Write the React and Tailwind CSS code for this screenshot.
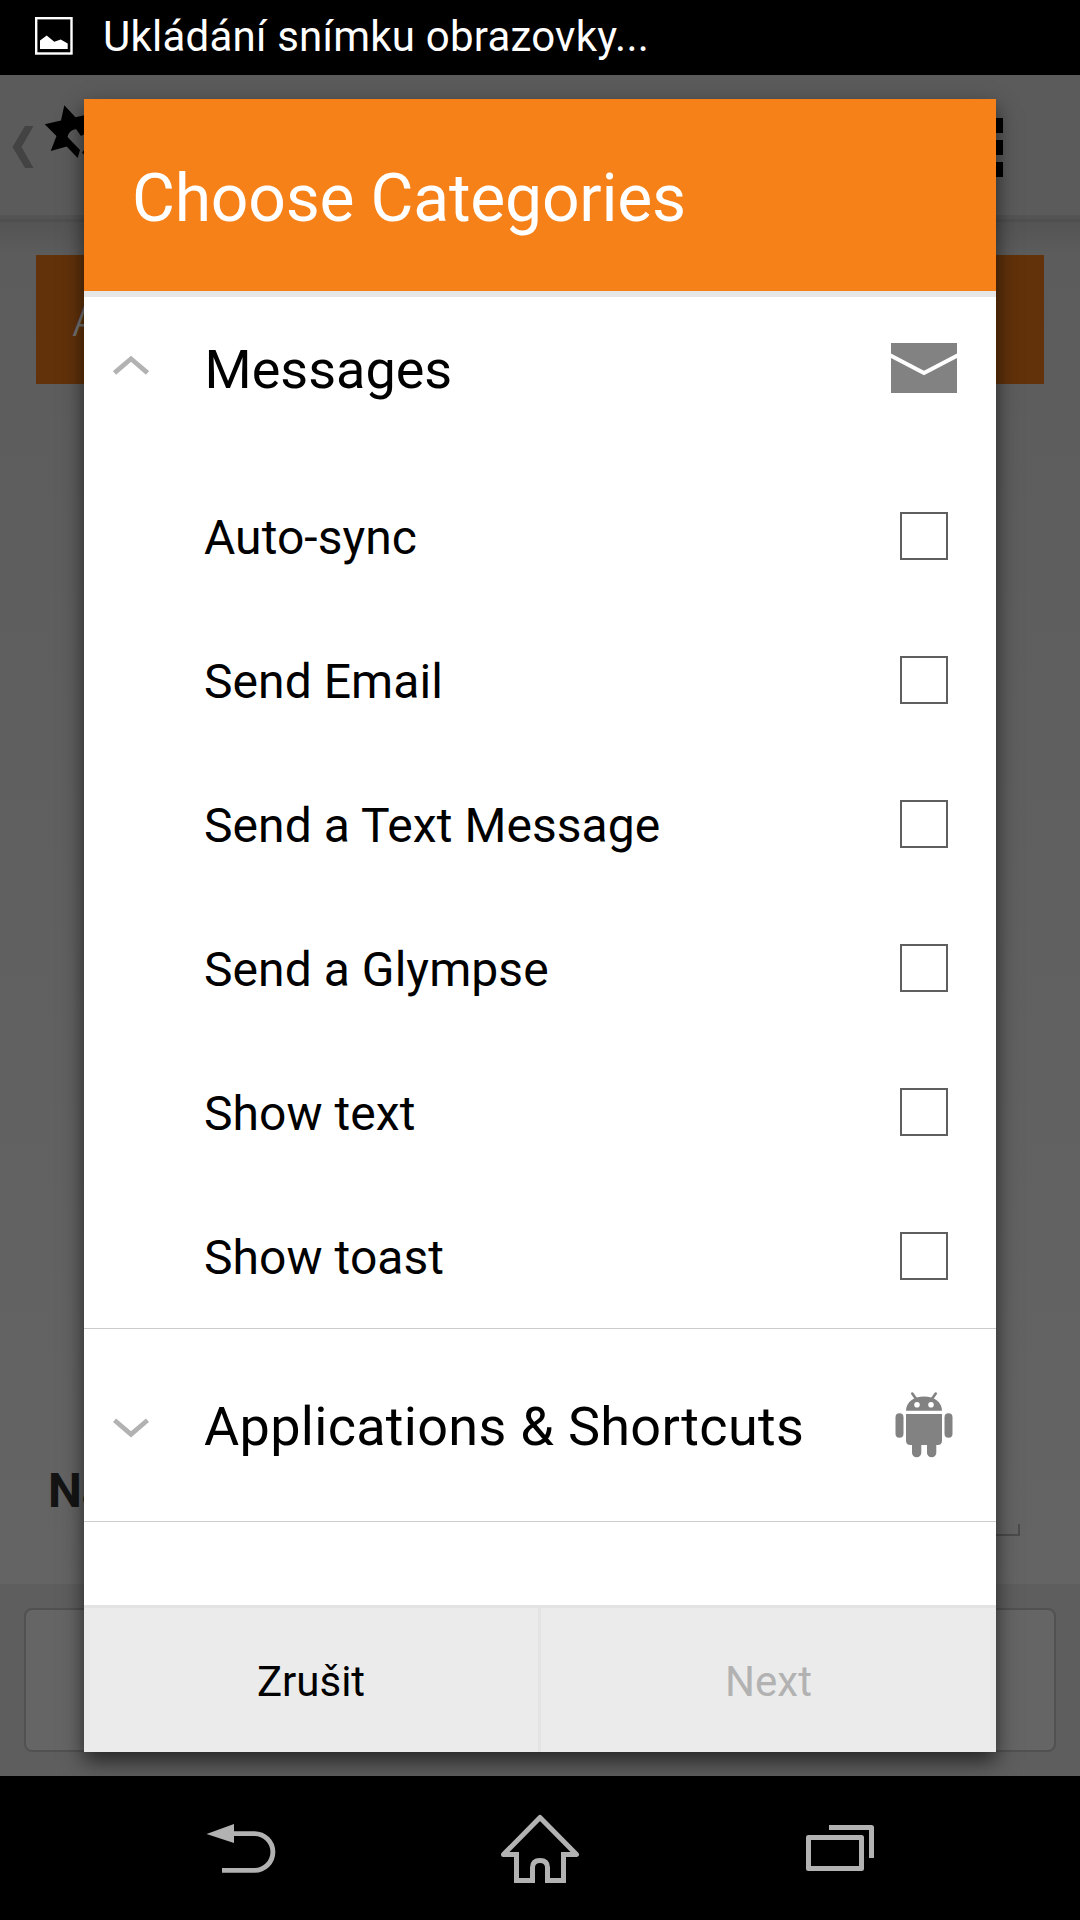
import React, { useState } from 'react';

const MESSAGE_ITEMS = [
  'Auto-sync',
  'Send Email',
  'Send a Text Message',
  'Send a Glympse',
  'Show text',
  'Show toast',
];

const PictureIcon = () => (
  <svg className="w-[38px] h-[38px]" viewBox="0 0 38 38" fill="none">
    <rect x="1.2" y="1.2" width="35.3" height="35.3" stroke="#fff" strokeWidth="2.4" />
    <path d="M5 32v-8.5l6.7-5 7.6 6.3 6.4-2.3 7 4V32z" fill="#fff" />
  </svg>
);

const Chevron = ({ open }) => (
  <svg className="w-9 h-9" viewBox="0 0 36 36" fill="none" stroke="#b2b2b2" strokeWidth="4.8">
    <path d={open ? 'M1.5 23L18 8.8L34.5 23' : 'M1.5 13.2L18 27.4L34.5 13.2'} />
  </svg>
);

const MailIcon = () => (
  <svg className="w-[66px] h-[50px] -mt-px" viewBox="0 0 66 50" fill="none">
    <rect width="66" height="50" fill="#828282" />
    <path d="M-1 12.2L33 30L67 12.2" stroke="#fff" strokeWidth="4" />
  </svg>
);

const AndroidIcon = () => (
  <svg className="w-[58px] h-[66px] -mt-px" viewBox="0 0 58 66" fill="#828282">
    <path d="M17.3 1.5L21.5 7.5M40.7 1.5L36.5 7.5" stroke="#828282" strokeWidth="2.6" strokeLinecap="round" />
    <path d="M11 18.7C11 10.5 18.5 4.6 29 4.6S47 10.5 47 18.7z" />
    <circle cx="22" cy="12.8" r="2.8" fill="#fff" />
    <circle cx="36" cy="12.8" r="2.8" fill="#fff" />
    <path d="M11 22h36v26.5q0 4.5-4.5 4.5h-27q-4.5 0-4.5-4.5z" />
    <rect x="0.5" y="21.2" width="8" height="24.5" rx="4" />
    <rect x="49.5" y="21.2" width="8" height="24.5" rx="4" />
    <rect x="17" y="46" width="9.3" height="19.3" rx="4.6" />
    <rect x="32" y="46" width="9.3" height="19.3" rx="4.6" />
  </svg>
);

const BackIcon = () => (
  <svg className="w-24 h-24" viewBox="0 0 96 96" fill="none">
    <path d="M14.5 34L42 24v19z" fill="#b2b2b2" />
    <path d="M41 33.6H62.5a18.4 18.4 0 0 1 0 36.8H30" stroke="#b2b2b2" strokeWidth="4.9" />
  </svg>
);

const HomeIcon = () => (
  <svg className="w-24 h-24" viewBox="0 0 96 96" fill="none" stroke="#b2b2b2" strokeWidth="5" strokeLinejoin="round">
    <path d="M24.5 54.5H11.5L48 17.5L84.5 54.5H71.5" />
    <path d="M24.5 52V80.5H40.5V67.5Q40.5 60.5 48 60.5T55.5 67.5V80.5H71.5V52" strokeLinejoin="miter" />
  </svg>
);

const RecentsIcon = () => (
  <svg className="w-24 h-24" viewBox="0 0 96 96" fill="none" stroke="#b2b2b2" strokeWidth="5" strokeLinejoin="round">
    <rect x="16.5" y="37.5" width="53" height="31" />
    <path d="M37 27.5H79.5V58" />
  </svg>
);

const StatusBar = () => (
  <div className="h-[75px] bg-black flex items-center pl-[35px] pb-[3px] gap-[30px]">
    <PictureIcon />
    <span className="pt-[2px] text-[42px] leading-none tracking-[0.23px] text-white whitespace-nowrap">Ukládání snímku obrazovky...</span>
  </div>
);

// The screen behind the dialog, already dimmed
const DimmedScreen = () => (
  <div className="h-full flex flex-col bg-linear-to-b from-[#5b5b5b] to-[#656565]">
    <div className="h-[140px] bg-[#5b5b5b] flex items-start justify-between pl-[12px] pr-[77px]">
      <div className="flex items-start">
        <svg className="w-[22px] h-[42px] mt-[51px]" viewBox="0 0 22 42" fill="#434343">
          <path d="M0.5 21L13 0h8.5L9.5 21L21.5 42H13z" />
        </svg>
        <svg className="w-[60px] h-[60px] mt-[30px] ml-[10px]" viewBox="0 0 60 60" fill="#000">
          <path d="M20.3 0.3L31.5 12.3L46 9V26L37 31L32 24Q25 25 23.5 32L36 45L33.7 53L22.7 41.5L6.7 46L12.5 31L0.7 19.3L17 15.5z" />
          <path d="M38 47.5L41 44L48 52L45 55z" />
        </svg>
      </div>
      <div className="flex flex-col gap-[7px] mt-[43px]">
        <div className="size-[15px] bg-black" />
        <div className="size-[15px] bg-black" />
        <div className="size-[15px] bg-black" />
      </div>
    </div>
    <div className="h-[4px] bg-[#545454]" />
    <div className="h-[3px] bg-[#4f4f4f]" />
    <div className="h-[33px] bg-linear-to-b from-[#545454] to-[#5c5c5c]" />
    <div className="h-[129px] mx-9 bg-[#62320a] flex items-center pl-[36px]">
      <span className="text-[48px] leading-none font-light text-[#757575]">A</span>
    </div>
    <div className="flex-1 flex items-end justify-between pl-12 pr-[60px] pb-[48px]">
      <span className="text-[48px] leading-none font-bold text-[#141414] mb-[21px]">Na</span>
      <div className="w-[780px] h-3 border-x-2 border-b-2 border-[#4b4b4b]" />
    </div>
    <div className="h-48 p-6 bg-[#5e5e5e]">
      <div className="h-full rounded-lg border-2 border-[#515151] bg-[#656565]" />
    </div>
  </div>
);

const GroupRow = ({ label, labelClass, open, icon, onClick }) => (
  <div onClick={onClick} className="h-48 shrink-0 flex items-center pl-[29px] cursor-pointer">
    <Chevron open={open} />
    <span className={`flex-1 pt-[4px] text-[54px] leading-none text-black whitespace-nowrap ${labelClass}`}>{label}</span>
    <div className="w-36 shrink-0 flex justify-center">{icon}</div>
  </div>
);

const ItemRow = ({ label, checked, onToggle }) => (
  <div onClick={onToggle} className="h-36 shrink-0 flex items-center pl-[120px] pr-12 cursor-pointer">
    <span className="flex-1 pt-[3px] text-[48px] leading-none tracking-[0.06px] text-black">{label}</span>
    <div className={`size-12 border-2 border-[#5f5f5f] ${checked ? 'bg-[#f78119]' : 'bg-white'}`} />
  </div>
);

const CategoryDialog = () => {
  const [openGroup, setOpenGroup] = useState('messages');
  const [selected, setSelected] = useState([]);

  const toggleGroup = (name) => setOpenGroup(openGroup === name ? null : name);
  const toggleItem = (item) => {
    setSelected(selected.includes(item) ? selected.filter((i) => i !== item) : [...selected, item]);
  };

  return (
    <div className="w-[912px] h-[1653px] flex flex-col bg-white shadow-[0_9px_20px_rgba(0,0,0,0.62)]">

      {/* Header */}
      <div className="h-[198px] shrink-0 flex items-center pl-12 pt-[7px] bg-[#f78119] border-b-6 border-[#e6e6e6]">
        <h1 className="text-[66px] leading-none tracking-[-0.22px] text-white">Choose Categories</h1>
      </div>

      {/* Category list, scrolled down a little */}
      <div className="flex-1 overflow-hidden flex flex-col">
        <div className="-mt-[25px] flex flex-col border-b border-[#cccccc]">
          <GroupRow label="Messages" labelClass="pl-[55.5px]" open={openGroup === 'messages'} icon={<MailIcon />} onClick={() => toggleGroup('messages')} />
          {openGroup === 'messages' && MESSAGE_ITEMS.map((item) => (
            <ItemRow key={item} label={item} checked={selected.includes(item)} onToggle={() => toggleItem(item)} />
          ))}
        </div>
        <div className="border-b border-[#cccccc]">
          <GroupRow label="Applications &amp; Shortcuts" labelClass="pl-[55px] tracking-[0.3px]" open={openGroup === 'apps'} icon={<AndroidIcon />} onClick={() => toggleGroup('apps')} />
        </div>
      </div>

      {/* Buttons */}
      <div className="h-[147px] shrink-0 flex bg-[#ebebeb] border-t-3 border-[#e3e3e3] text-[42px] leading-none">
        <button className="w-[457px] pt-[3px] border-r-3 border-[#e3e3e3] text-black">Zrušit</button>
        <button disabled={selected.length === 0} className="flex-1 pt-[3px] text-black disabled:text-[#b2b2b2]">Next</button>
      </div>
    </div>
  );
};

const App = () => (
  <div className="w-[1080px] h-[1920px] flex flex-col overflow-hidden bg-black font-[Roboto,sans-serif]">
    <StatusBar />
    <div className="relative h-[1701px] overflow-hidden">
      <DimmedScreen />
      <div className="absolute inset-0 flex items-center justify-center">
        <CategoryDialog />
      </div>
    </div>
    <div className="h-36 bg-black flex items-center px-[90px]">
      <div className="flex-1 flex justify-center"><BackIcon /></div>
      <div className="flex-1 flex justify-center"><HomeIcon /></div>
      <div className="flex-1 flex justify-center"><RecentsIcon /></div>
    </div>
  </div>
);

export default App;
